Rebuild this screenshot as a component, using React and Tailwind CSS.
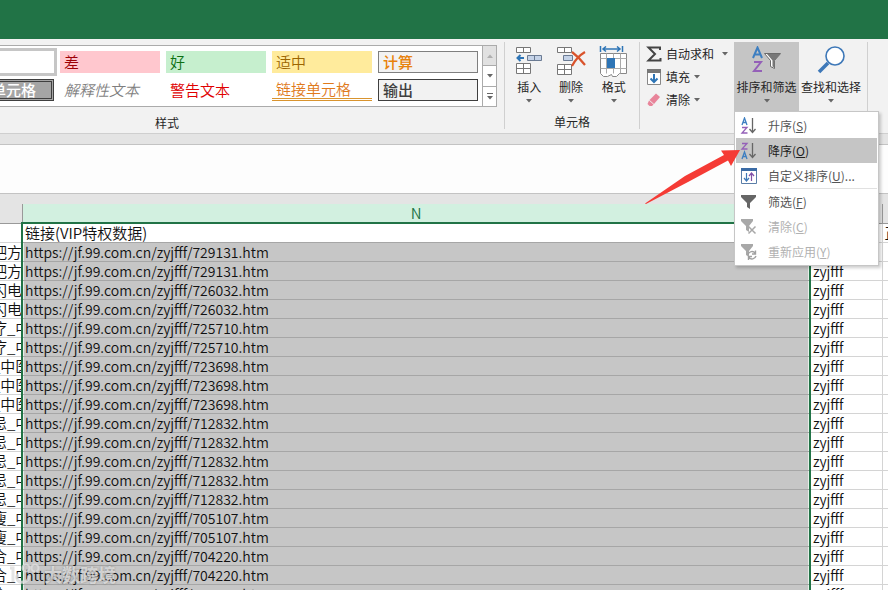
import { clsx } from 'clsx';

const styleCells = [
  { label: '', className: 'bg-white ring-3 ring-[#c6c6c6]' },
  { label: '差', className: 'bg-[#ffc7ce] text-[#9c0006] font-[350]' },
  { label: '好', className: 'bg-[#c6efce] text-[#0d7013] font-[350]' },
  { label: '适中', className: 'bg-[#ffeb9c] text-[#9c6500] font-[350]' },
  { label: '计算', className: 'border border-[#7f7f7f] bg-[#f2f2f2] text-[#e8820c] font-medium' },
  { label: '检查单元格', className: 'border-3 border-double border-[#3f3f3f] bg-[#a5a5a5] text-white font-medium' },
  { label: '解释性文本', className: 'italic text-[#7f7f7f] font-[350]' },
  { label: '警告文本', className: 'text-[#e00000] font-[350]' },
  { label: '链接单元格', className: 'border-b-3 border-double border-[#d9942f] text-[#e07a1c] font-[350]' },
  { label: '输出', className: 'border border-[#3f3f3f] bg-[#f2f2f2] text-[#3f3f3f] font-medium' },
];

const rows = [
  { left: '吧方', id: '729131' },
  { left: '吧方', id: '729131' },
  { left: '闪电', id: '726032' },
  { left: '闪电', id: '726032' },
  { left: '疗_中', id: '725710' },
  { left: '疗_中', id: '725710' },
  { left: '_中医', id: '723698' },
  { left: '_中医', id: '723698' },
  { left: '_中医', id: '723698' },
  { left: '忌_中', id: '712832' },
  { left: '忌_中', id: '712832' },
  { left: '忌_中', id: '712832' },
  { left: '忌_中', id: '712832' },
  { left: '忌_中', id: '712832' },
  { left: '瘦_中', id: '705107' },
  { left: '瘦_中', id: '705107' },
  { left: '合_中', id: '704220' },
  { left: '合_中', id: '704220' },
  { left: '合_中', id: '704220' },
];

function Caret() {
  return (
    <svg width="6" height="4" viewBox="0 0 6 4" className="shrink-0" aria-hidden="true">
      <path d="M0 0h6L3 3.5z" fill="#666" />
    </svg>
  );
}

function InsertIcon() {
  return (
    <svg width="28" height="30" viewBox="0 0 28 30" fill="#fff" stroke="#777" aria-hidden="true">
      <path d="M1.5 1.5h14v5h-14zM8.5 1.5v5M1.5 17.5h14v10h-14zM8.5 17.5v10M1.5 22.5h14" />
      <path d="M12.5 9.5h14v5h-14zM19.5 9.5v5" fill="#c5d3e8" stroke="#6b7b93" />
      <path d="M9 12H3M5.5 9L2.5 12l3 3" fill="none" stroke="#2e75b6" strokeWidth="2" />
    </svg>
  );
}

function DeleteIcon() {
  return (
    <svg width="30" height="30" viewBox="0 0 30 30" fill="#fff" stroke="#777" aria-hidden="true">
      <path d="M1.5 1.5h14v5h-14zM8.5 1.5v5M1.5 18.5h14v10h-14zM8.5 18.5v10M1.5 23.5h14" />
      <path d="M7.5 9.5h9v5h-9z" fill="#c5d3e8" stroke="#6b7b93" />
      <path d="M16 6c4 3 9 8 13 13M29 6c-5 3-10 8-13 14" fill="none" stroke="#d9532c" strokeWidth="2.2" />
    </svg>
  );
}

function FormatIcon() {
  return (
    <svg width="30" height="32" viewBox="0 0 30 32" fill="none" stroke="#888" aria-hidden="true">
      <path d="M1.5 7.5h26v20h-7l-3 3h-4l-1-2-4 2h-4l-3-3z" fill="#fff" />
      <path d="M7.5 7.5v20M14.5 7.5v20M21.5 7.5v20M1.5 12.5h26M1.5 22.5h26" stroke="#aaa" />
      <path d="M8 12h8v10H8z" fill="#2e75b6" stroke="none" />
      <path d="M1.5 0v6M23.5 0v6M4 3h17M7 .5L4 3l3 2.5M18 .5L21 3l-3 2.5" stroke="#2e75b6" strokeWidth="1.5" />
    </svg>
  );
}

function SortFilterIcon() {
  return (
    <svg width="30" height="28" viewBox="0 0 30 28" fill="none" aria-hidden="true">
      <path d="M1 12L5.5 1.5 10 12M3 8.5h5" stroke="#3e7fc1" strokeWidth="2" />
      <path d="M2 16h7L2 25h8" stroke="#9460b8" strokeWidth="2" />
      <path d="M12.5 7.5h16l-6 7v8l-4-2v-6z" fill="#fff" stroke="#6a6a6a" />
      <path d="M15 8h13.5l-6 6.5v7l-2-1v-6z" fill="#777" />
    </svg>
  );
}

function SearchIcon() {
  return (
    <svg width="28" height="28" viewBox="0 0 28 28" fill="none" stroke="#3e78b8" aria-hidden="true">
      <circle cx="18" cy="10" r="9" fill="#fff" strokeWidth="1.6" />
      <path d="M11 17L2 26" strokeWidth="3.5" />
    </svg>
  );
}

function SigmaIcon() {
  return (
    <svg width="16" height="16" viewBox="0 0 16 16" fill="none" stroke="#444" strokeWidth="2" aria-hidden="true">
      <path d="M14 4V1.5H2.5L9 8l-6.5 6.5H14.5V12" />
    </svg>
  );
}

function FillIcon() {
  return (
    <svg width="16" height="16" viewBox="0 0 16 16" fill="none" aria-hidden="true">
      <path d="M1.5 .5h13v15h-13z" fill="#fff" stroke="#888" />
      <path d="M1 0h14v4H1z" fill="#777" />
      <path d="M8 5v8M4.5 9.5L8 13l3.5-3.5" stroke="#2e75b6" strokeWidth="2" />
    </svg>
  );
}

function EraserIcon() {
  return (
    <svg width="16" height="16" viewBox="0 0 16 16" aria-hidden="true">
      <path d="M10 1.5l4 3.5-6 7-4.5-4z" fill="#e8849a" />
      <path d="M3 8.5l4.5 4L6 14H3.5l-2-2z" fill="#e8849a" />
    </svg>
  );
}

function SortIcon({ descending }) {
  return (
    <svg width="18" height="18" viewBox="0 0 18 18" fill="none" strokeWidth="1.3" aria-hidden="true">
      <g transform={descending ? 'translate(0 9)' : undefined}>
        <path d="M2 8l2.5-7L7 8M3 5.5h3" stroke="#3e7fc1" />
      </g>
      <g transform={descending ? 'translate(0 -9)' : undefined}>
        <path d="M2 10.5h5L2 16h5.5" stroke="#9460b8" />
      </g>
      <path d="M12.5 1v14M9.5 12l3 3.5 3-3.5" stroke="#666" />
    </svg>
  );
}

function CustomSortIcon() {
  return (
    <svg width="18" height="18" viewBox="0 0 18 18" fill="none" aria-hidden="true">
      <path d="M1.5 1.5h15v15h-15z" fill="#fff" stroke="#5b7ea8" />
      <path d="M1 1h16v3H1z" fill="#3b6ba5" />
      <path d="M6.5 6v7.5M4 11l2.5 3L9 11" stroke="#3e78b8" strokeWidth="1.2" />
      <path d="M11.5 14V6.5M9 9l2.5-3L14 9" stroke="#8050a8" strokeWidth="1.2" />
    </svg>
  );
}

function FunnelIcon({ variant }) {
  return (
    <svg width="18" height="18" viewBox="0 0 18 18" fill="none" aria-hidden="true">
      {!variant && <path d="M1 2h15v2l-6 6v6l-3-2v-4L1 4z" fill="#666" />}
      {variant && <path d="M1 1h12v2L9 8v6l-3-2V8L1 3z" fill="#a8a8a8" />}
      {variant === 'clear' && <path d="M8.5 8.5l7 7M15.5 8.5l-7 7" stroke="#a8a8a8" strokeWidth="1.5" />}
      {variant === 'reapply' && (
        <path d="M8 11.5c1-3 5-4 7-1.5M15.5 7.5V11H12M16 13c-1 3-5 4-7 1.5M8.5 17v-3.5H12" stroke="#a0a0a0" strokeWidth="1.4" />
      )}
    </svg>
  );
}

const menuItems = [
  { label: '升序', hotkey: 'S', icon: <SortIcon /> },
  { label: '降序', hotkey: 'O', icon: <SortIcon descending />, active: true },
  { label: '自定义排序', hotkey: 'U', suffix: '...', icon: <CustomSortIcon /> },
  { label: '筛选', hotkey: 'F', icon: <FunnelIcon />, divided: true },
  { label: '清除', hotkey: 'C', icon: <FunnelIcon variant="clear" />, disabled: true },
  { label: '重新应用', hotkey: 'Y', icon: <FunnelIcon variant="reapply" />, disabled: true },
];

function BigButton({ icon, label, className }) {
  return (
    <button type="button" className={clsx('flex h-[70px] flex-col items-center pt-1 whitespace-nowrap', className)}>
      <span className="flex h-[31px] items-start justify-center">{icon}</span>
      <span className="h-5 leading-5">{label}</span>
      <span className="flex h-2 items-center"><Caret /></span>
    </button>
  );
}

function SmallButton({ icon, label, wide }) {
  return (
    <button type="button" className="flex h-[23px] items-center whitespace-nowrap">
      {icon}
      <span className={clsx('ml-1', wide ? 'mr-2' : 'mr-1')}>{label}</span>
      <Caret />
    </button>
  );
}

function SortMenu() {
  return (
    <div role="menu" className="absolute top-[69px] left-0 z-20 w-[145px] border border-[#c6c6c6] bg-white p-px shadow-[2px_2px_3px_rgba(0,0,0,0.2)]">
      {menuItems.map((item) => (
        <div key={item.label}>
          {item.divided && <div className="ml-8 h-px bg-[#e1e1e1]" />}
          <button
            type="button"
            role="menuitem"
            disabled={item.disabled}
            className={clsx(
              'flex h-[25px] w-full items-center gap-2.5 pl-1 text-left whitespace-nowrap',
              item.active && 'bg-[#c5c5c5] text-[#222]',
              item.disabled && 'text-[#b1b1b1]',
              !item.active && !item.disabled && 'text-[#555]',
            )}
          >
            {item.icon}
            <span>{item.label}(<u>{item.hotkey}</u>){item.suffix}</span>
          </button>
        </div>
      ))}
    </div>
  );
}

function StyleGallery() {
  return (
    <section className="flex w-[505px] shrink-0 flex-col border-r border-[#d0d0d0] pt-[3px]">
      <div className="flex h-[62px] w-[497px] shrink-0 border-y border-r border-[#ababab] bg-white">
        <div className="flex min-w-0 flex-1 justify-end overflow-hidden">
          <div className="grid w-[528px] shrink-0 grid-cols-5 content-start gap-1.5 pt-[5px] pr-1 text-[15px]">
            {styleCells.map((cell, i) => (
              <button key={i} type="button" className={clsx('flex h-[22px] w-full items-center px-1 leading-5 whitespace-nowrap', cell.className)}>
                {cell.label}
              </button>
            ))}
          </div>
        </div>
        <div className="flex w-[14px] flex-col border-l border-[#ababab]">
          <button type="button" aria-label="上" className="flex flex-1 items-center justify-center bg-[#e1e1e1]"><span className="rotate-180 opacity-40"><Caret /></span></button>
          <button type="button" aria-label="下" className="flex flex-1 items-center justify-center border-y border-[#ababab]"><Caret /></button>
          <button type="button" aria-label="更多" className="flex flex-1 flex-col items-center justify-center gap-0.5"><span className="h-px w-1.5 bg-[#666]" /><Caret /></button>
        </div>
      </div>
      <h2 className="pt-2 pl-[155px] leading-4">样式</h2>
    </section>
  );
}

function Ribbon() {
  return (
    <header className="relative z-10 flex h-[95px] border-b border-[#cfcfcf] bg-[#f2f2f2] pt-[3px] pb-1 text-[12px] text-[#262626]">
      <StyleGallery />
      <section className="flex w-[135px] shrink-0 flex-col border-r border-[#d0d0d0]">
        <div className="flex h-[71px] justify-around px-1">
          <BigButton icon={<InsertIcon />} label="插入" />
          <BigButton icon={<DeleteIcon />} label="删除" />
          <BigButton icon={<FormatIcon />} label="格式" />
        </div>
        <h2 className="text-center leading-5">单元格</h2>
      </section>
      <section className="flex pl-[6px]">
        <div className="flex w-[88px] flex-col">
          <SmallButton icon={<SigmaIcon />} label="自动求和" wide />
          <SmallButton icon={<FillIcon />} label="填充" />
          <SmallButton icon={<EraserIcon />} label="清除" />
        </div>
        <div className="relative">
          <BigButton icon={<SortFilterIcon />} label="排序和筛选" className="w-[65px] bg-[#c5c5c5]" />
          <SortMenu />
          <svg width="96" height="56" viewBox="0 0 96 56" className="absolute top-[107px] -left-[89px] z-30" aria-hidden="true">
            <path d="M0 54.5L40 27 79 6l-3-4.5L95 1 86 17l-3-5.500L43 33 1 55z" fill="#f53b35" />
          </svg>
        </div>
        <BigButton icon={<SearchIcon />} label="查找和选择" className="w-[64px]" />
        <div className="ml-1 w-px bg-[#d0d0d0]" />
      </section>
    </header>
  );
}

function Sheet() {
  return (
    <table className="w-full table-fixed border-collapse text-[15px] font-[350] text-[#111]">
      <colgroup>
        <col className="w-[22px]" />
        <col />
        <col className="w-[72px]" />
        <col className="w-[6px]" />
      </colgroup>
      <thead>
        <tr className="h-[18px] bg-[#e4e4e4] leading-[18px]">
          <th className="border-r border-b border-[#999]" />
          <th className="border-b-2 border-[#217346] bg-[#d2f0e0] font-[350] text-[#217346]">N</th>
          <th className="border-r border-b border-[#999]" />
          <th className="border-b border-[#999]" />
        </tr>
      </thead>
      <tbody>
        <tr className="h-[19px] leading-[18px]">
          <td className="border-b border-[#d4d4d4]" />
          <td className="border-x-2 border-b border-x-[#217346] border-b-[#a6a6a6] px-0.5">链接(VIP特权数据)</td>
          <td className="border-r border-b border-[#d4d4d4]" />
          <td className="overflow-hidden border-b border-[#d4d4d4] pl-0.5 whitespace-nowrap">正</td>
        </tr>
        {rows.map((row, i) => (
          <tr key={i} className="h-[19px] leading-[18px]">
            <td className="overflow-hidden border-b border-[#d4d4d4] whitespace-nowrap">
              <div className="-ml-2">{row.left}</div>
            </td>
            <td className="border-x-2 border-b border-x-[#217346] border-b-[#a6a6a6] bg-[#c6c6c6] px-0.5 text-[14px] shadow-[inset_1px_0_0_#e6efe9,inset_-1px_0_0_#e6efe9]">
              https://jf.99.com.cn/zyjfff/{row.id}.htm
            </td>
            <td className="border-r border-b border-[#d4d4d4] px-0.5 text-[14px]">zyjfff</td>
            <td className="border-b border-[#d4d4d4]" />
          </tr>
        ))}
      </tbody>
    </table>
  );
}

function Watermark() {
  return (
    <div className="pointer-events-none absolute bottom-1 left-2 flex items-center gap-1 text-[18px] leading-6 font-bold text-white/60 [text-shadow:0_0_2px_rgba(90,90,90,0.6)]">
      <svg width="32" height="24" viewBox="0 0 32 24" fill="none" stroke="#ddd" strokeOpacity="0.8" aria-hidden="true">
        <path d="M2 6h3v14M10 12c-3 4 0 9 5 8 4 0 6-3 6-6" strokeWidth="3" />
        <circle cx="18" cy="6" r="3.5" strokeWidth="2" />
        <circle cx="27" cy="6" r="3.5" strokeWidth="2" />
      </svg>
      <span>大数跨境</span>
    </div>
  );
}

export default function App() {
  return (
    <div className="relative h-screen overflow-hidden bg-white font-['Noto_Sans_CJK_SC',sans-serif]">
      <div className="h-[39px] bg-[#217346]" />
      <Ribbon />
      <div className="h-[10px] bg-[#e4e4e4]" />
      <div className="h-[50px] border-y border-[#c3c3c3] bg-[#fdfdfd]" />
      <div className="h-[10px] bg-[#e4e4e4]" />
      <Sheet />
      <Watermark />
    </div>
  );
}
